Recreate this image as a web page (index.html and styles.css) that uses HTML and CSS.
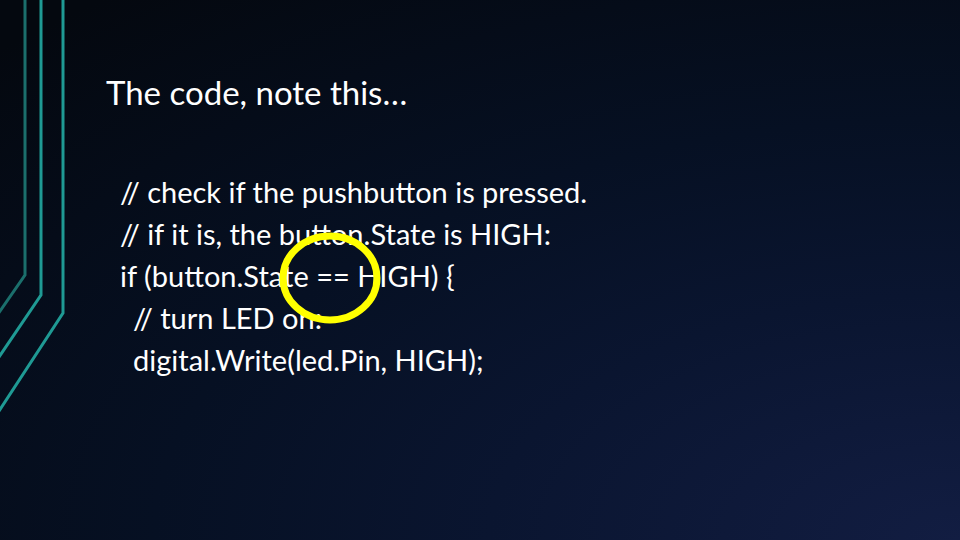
FILE: index.html
```html
<!DOCTYPE html>
<html>
<head>
<meta charset="utf-8">
<link rel="stylesheet" href="styles.css">
</head>
<body>
<div class="slide">
  <svg class="deco" width="80" height="420" viewBox="0 0 80 420">
    <polyline points="25,0 25,275 -20,340" class="ln dim"/>
    <polyline points="41,0 41,295 -20,385" class="ln"/>
    <polyline points="63,0 63,313 -20,440" class="ln"/>
  </svg>
  <h1 class="title">The code, note this…</h1>
  <div class="code">
    <div class="line">// check if the pushbutton is pressed.</div>
    <div class="line">// if it is, the button.State is HIGH:</div>
    <div class="line">if (button.State == HIGH) {</div>
    <div class="line indent">// turn LED on:</div>
    <div class="line indent">digital.Write(led.Pin, HIGH);</div>
  </div>
  <svg class="mark" width="120" height="110" viewBox="0 0 120 110">
    <ellipse cx="60" cy="55" rx="47" ry="42" fill="none" stroke="#ffff00" stroke-width="7"/>
  </svg>
</div>
</body>
</html>
```
FILE: styles.css
```css
html, body {
  margin: 0;
  padding: 0;
}
.slide {
  position: relative;
  width: 960px;
  height: 540px;
  overflow: hidden;
  background: radial-gradient(ellipse 140% 130% at 100% 100%, #121d42 0%, #0a1530 35%, #061023 60%, #04080f 100%);
  font-family: "Lato", "Open Sans", sans-serif;
  color: #ffffff;
  padding: 71px 0 0 106px;
  box-sizing: border-box;
}
.deco {
  position: absolute;
  left: 0;
  top: 0;
}
.ln {
  fill: none;
  stroke: #1f9a94;
  stroke-width: 3;
}
.ln.dim {
  stroke: #1b6f6c;
}
.title {
  margin: 0;
  font-weight: 400;
  font-size: 33px;
  line-height: 42px;
}
.code {
  margin: 58px 0 0 14px;
  font-size: 29px;
  line-height: 42px;
}
.indent {
  padding-left: 13px;
}
.mark {
  position: absolute;
  left: 270px;
  top: 223px;
}
```
